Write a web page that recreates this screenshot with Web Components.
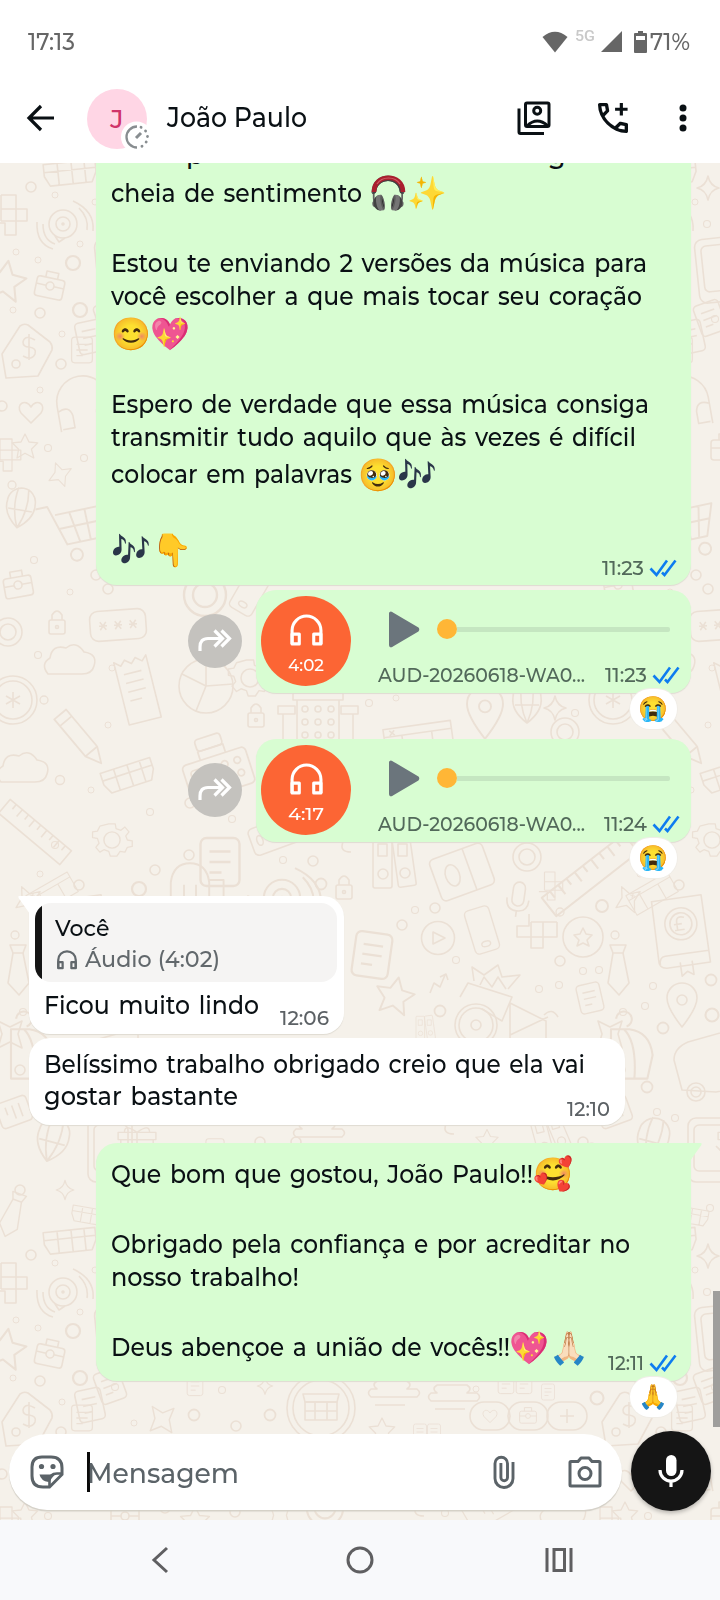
<!DOCTYPE html>
<html lang="pt-BR"><head><meta charset="utf-8"><title>João Paulo</title>
<style>
html,body{margin:0;height:1600px;overflow:hidden;background:#fff}
body{font-family:Montserrat,Inter,"Open Sans",sans-serif;font-weight:460;color:#0a1014}
</style></head><body>
<chat-app>
  <status-bar slot="top"></status-bar>
  <chat-header slot="top" name="João Paulo" initial="J"></chat-header>

  <chat-bubble out nocap style="width:595px;height:446px;margin-top:-24px">
    <text-line style="display:flex"><fit-text style="margin-left:75px">p</fit-text><fit-text style="margin-left:344px">g</fit-text></text-line>
    <text-line emoji><fit-text w="251">cheia de sentimento</fit-text><emoji-glyph kind="phones" style="margin-left:8px">🎧</emoji-glyph><emoji-glyph style="margin-left:2px">✨</emoji-glyph></text-line>
    <text-line></text-line>
    <text-line><fit-text w="536">Estou te enviando 2 versões da música para</fit-text></text-line>
    <text-line><fit-text w="531">você escolher a que mais tocar seu coração</fit-text></text-line>
    <text-line emoji><emoji-glyph style="margin-left:2px">😊</emoji-glyph><emoji-glyph style="margin-left:2px">💖</emoji-glyph></text-line>
    <text-line></text-line>
    <text-line><fit-text w="538">Espero de verdade que essa música consiga</fit-text></text-line>
    <text-line><fit-text w="525">transmitir tudo aquilo que às vezes é difícil</fit-text></text-line>
    <text-line emoji><fit-text w="241">colocar em palavras</fit-text><emoji-glyph style="margin-left:8px">🥹</emoji-glyph><emoji-glyph kind="notes" style="margin-left:2px">🎶</emoji-glyph></text-line>
    <text-line></text-line>
    <text-line emoji><emoji-glyph kind="notes" style="margin-left:2px">🎶</emoji-glyph><emoji-glyph style="margin-left:4px">👇</emoji-glyph></text-line>
    <msg-time slot="time" w="42" read>11:23</msg-time>
  </chat-bubble>

  <audio-message dur="4:02" time="11:23" tw="42" style="margin-top:4.5px"></audio-message>
  <audio-message dur="4:17" time="11:24" tw="43" style="margin-top:46.3px"></audio-message>

  <chat-bubble tail style="width:315px;height:138px;margin-top:54px;padding-top:7px">
    <quote-box who="Você" what="Áudio (4:02)"></quote-box>
    <text-line style="margin-top:7px"><fit-text w="215">Ficou muito lindo</fit-text></text-line>
    <msg-time slot="time" w="49">12:06</msg-time>
  </chat-bubble>
  <chat-bubble style="width:596px;height:87px;margin-top:4px;padding-top:10px">
    <text-line><fit-text w="541">Belíssimo trabalho obrigado creio que ela vai</fit-text></text-line>
    <text-line><fit-text w="194">gostar bastante</fit-text></text-line>
    <msg-time slot="time" w="43">12:10</msg-time>
  </chat-bubble>
  <chat-bubble out tail style="width:595px;height:238px;margin-top:18px;padding-top:10px">
    <text-line emoji><fit-text w="422">Que bom que gostou, João Paulo!!</fit-text><emoji-glyph style="margin-left:2px">🥰</emoji-glyph></text-line>
    <text-line></text-line>
    <text-line><fit-text w="519">Obrigado pela confiança e por acreditar no</fit-text></text-line>
    <text-line><fit-text w="188">nosso trabalho!</fit-text></text-line>
    <text-line></text-line>
    <text-line emoji><fit-text w="399">Deus abençoe a união de vocês!!</fit-text><emoji-glyph style="margin-left:1px">💖</emoji-glyph><emoji-glyph style="margin-left:3px">🙏🏻</emoji-glyph></text-line>
    <msg-time slot="time" w="36" read>12:11</msg-time>
    <reaction-pill slot="reaction">🙏</reaction-pill>
  </chat-bubble>

  <chat-composer slot="bottom" hint="Mensagem"></chat-composer>
  <nav-bar slot="nav"></nav-bar>
</chat-app>

<script>
const define=(name,html,setup)=>customElements.define(name,class extends HTMLElement{
  connectedCallback(){
    if(this.shadowRoot)return;
    const t=document.createElement('template');
    t.innerHTML=typeof html==='function'?html(this):html;
    this.attachShadow({mode:'open'}).append(t.content.cloneNode(true));
    if(setup)setup(this,this.shadowRoot);
  }
});

define('text-line',`<style>:host{display:flex;align-items:center;height:32.6px;line-height:32.6px;font-size:26px;word-spacing:2.5px;padding-left:15px}:host([emoji]){padding-top:5.1px;padding-bottom:5.3px}</style><slot></slot>`);

define('emoji-glyph',el=>`<style>:host{display:flex;flex:none;position:relative;top:.6px;width:37px;height:37px;align-items:center;justify-content:center;font:32px/37px "Noto Color Emoji",sans-serif;word-spacing:0;white-space:nowrap}
:host([kind=notes]) span{filter:brightness(.5) saturate(1.7) hue-rotate(25deg)}svg{position:absolute;left:0;top:0}</style><span><slot></slot></span>${el.getAttribute('kind')==='phones'?'<svg width="37" height="37"><path d="M4 17C4-2 33-2 33 17" fill="none" stroke="#a91f2e" stroke-width="4.6"/><path d="M7 9C12 1 25 1 30 9" fill="none" stroke="#cf5a66" stroke-width="1.2"/></svg>':''}`);

define('msg-time',el=>`<style>:host{display:flex;align-items:center;font-size:19.5px;line-height:20px;color:#5c6165}:host([read]){color:#52695a}svg{margin-left:5px}</style>
<fit-text w="${el.getAttribute('w')}">${el.textContent}</fit-text>${el.hasAttribute('read')?'<svg width="28" height="20" viewBox="0 0 28 20"><path d="M1.5 10.5l6 6.5L18 2.5M13 14.5l2.5 2.5L26.5 2.5" fill="none" stroke="#0e7cf0" stroke-width="2.6"/></svg>':''}`);

define('reaction-pill',`<style>:host{position:absolute;right:14.5px;bottom:-36.5px;z-index:2;width:47px;height:40px;border-radius:20px;background:#fff;box-shadow:0 0 0 1px #f0ede7;display:flex;align-items:center;justify-content:center;font:24px/40px "Noto Color Emoji",sans-serif}</style><slot></slot>`);

define('chat-bubble',`<style>:host{display:block;box-sizing:border-box;position:relative;flex:none;align-self:flex-start;margin-left:29px;background:#fff;border-radius:21px;box-shadow:0 1px 1px #dfdbd2}
:host([out]){align-self:flex-end;margin:0 29px 0 0;background:#d8fdd2}
:host([tail]){border-top-left-radius:0}:host([out][tail]){border-radius:21px 0 21px 21px}
.time{position:absolute;right:15px;bottom:6px}:host([out]) .time{right:14.500px;bottom:7.500px}
svg{display:none;position:absolute;top:0;left:-11px}:host([tail]) svg{display:block}:host([out]) svg{left:auto;right:-11px;transform:scaleX(-1)}
path{fill:#fff}:host([out]) path{fill:#d8fdd2}</style><svg width="12" height="18"><path d="M12 18V0H1.5Q-.5 0 .8 2.2Z"/></svg><slot></slot><div class="time"><slot name="time"></slot></div><slot name="reaction"></slot>`);

const phones=(w,c,sw)=>`<svg width="${w}" height="${w}" viewBox="0 0 32 32" fill="none" stroke="${c}" stroke-width="${sw}"><path d="M2 29V16a14 14 0 0 1 28 0V29"/><path d="M2 19.5h7V29H2zM23 19.5h7V29h-7z" stroke-linejoin="round"/></svg>`;

define('audio-message',el=>`<style>:host{display:flex;position:relative;align-items:center;align-self:flex-end;flex:none;margin-right:29px;height:103px}
.fwd{width:54px;height:54px;border-radius:50%;background:#c4c2be;display:flex;align-items:center;justify-content:center;margin-right:14px}
.b{display:flex;box-sizing:border-box;width:435px;height:103px;border-radius:20px;background:#d8fdd2;box-shadow:0 1px 1px #dfdbd2;padding:6px 0 0 5px}
.disc{width:90px;height:90px;border-radius:50%;background:#fc6534;color:#fff;text-align:center;font-size:17.5px;line-height:20px;flex:none}
.disc svg{display:block;margin:18.5px auto 8px}
.r{flex:1;padding-left:26.500px}.p{display:flex;align-items:center;height:67px;padding:0 0 2px 10px}
.p svg{margin-right:17.500px}.dot{width:20px;height:20px;border-radius:50%;background:#ffb636}.tr{width:213px;height:5px;border-radius:0 2px 2px 0;background:#c5e6c1}
.m{display:flex;align-items:center;height:20px;line-height:20px;font-size:19.5px;color:#52695a}msg-time{margin-left:auto;margin-right:11px}</style>
<div class="fwd"><svg width="34" height="24" viewBox="0 0 34 24" fill="none" stroke="#fff" stroke-width="3.2"><path d="M2 22V18Q2 9.5 10 9.5H23M16.5 1.500l8 8-8 8M23.500 1.500l8 8-8 8"/></svg></div>
<div class="b"><div class="disc">${phones(33,'#fff',3)}<fit-text w="36">${el.getAttribute('dur')}</fit-text></div>
<div class="r"><div class="p"><svg width="32" height="37" viewBox="0 0 32 37"><path d="M2 2.500Q2 1 4 2L29.500 17Q31 18.500 29.500 20L4 35Q2 36 2 34Z" fill="#6b757c" stroke="#6b757c" stroke-width="2" stroke-linejoin="round"/></svg><span class="dot"></span><span class="tr"></span></div>
<div class="m"><fit-text w="207">AUD-20260618-WA0...</fit-text><msg-time w="${el.getAttribute('tw')}" read>${el.getAttribute('time')}</msg-time></div></div></div>
<reaction-pill>😭</reaction-pill>`);

define('quote-box',el=>`<style>:host{display:block;box-sizing:border-box;margin:0 7px 0 6px;height:79px;border-radius:16px;background:linear-gradient(90deg,#151515 7px,#f5f4f3 7px);padding:10px 0 0 20px;font-size:23px}
.a,.c{display:flex;align-items:center;height:31.500px;line-height:31.500px}.c{color:#62686c}svg{margin:0 8px 0 2px}</style>
<div class="a"><fit-text w="54.500">${el.getAttribute('who')}</fit-text></div><div class="c">${phones(20,'#62686c',3.6)}<fit-text w="135">${el.getAttribute('what')}</fit-text></div>`);

define('status-bar',`<style>:host{display:flex;align-items:center;height:83px;padding:0 30px 0 28px;color:#666;font-size:23.500px;line-height:30px}
.g{margin-left:auto;display:flex;align-items:center}svg{display:block;flex:none}.n{font:500 14.500px/16px Roboto,sans-serif;color:#c9c9c9;margin:-9px 6px 0 7px}</style>
<fit-text w="47">17:13</fit-text><div class="g">
<svg width="26" height="22" viewBox="0 0 26 22"><path d="M13 21.500L.5 6Q13-4.500 25.500 6Z" fill="#666"/></svg>
<fit-text class="n" w="20">5G</fit-text>
<svg width="21" height="21"><path d="M21 0V21H0Z" fill="#666"/></svg>
<svg width="13" height="22" viewBox="0 0 13 22" style="margin-left:12px"><path d="M4 2V0h5v2h3q1 0 1 1v18q0 1-1 1H1q-1 0-1-1V3q0-1 1-1z" fill="#666"/><path d="M2 5h9v4H2z" fill="#fff"/></svg>
<fit-text w="40" style="margin-left:3px">71%</fit-text></div>`);

define('chat-header',el=>`<style>:host{display:flex;align-items:center;height:80px;box-sizing:border-box;padding-bottom:11px;background:#fff;padding-left:26px}
svg{display:block;flex:none}.av{position:relative;width:60px;height:60px;border-radius:50%;background:#ffd6e5;color:#d0346a;font-size:26px;line-height:60px;text-align:center;margin:2px 0 0 32px}
.bd{position:absolute;left:34px;top:32px}.nm{font-size:27px;line-height:34px;margin-left:20px;margin-top:1px}
.i1{margin-left:auto}.i2{margin-left:42px}.i3{margin:0 33px 0 46px}</style>
<svg width="29" height="28" viewBox="0 0 29 28" fill="none" stroke="#0a1014" stroke-width="3.2"><path d="M15 2L3 14l12 12M3 14h25"/></svg>
<div class="av">${el.getAttribute('initial')}<svg class="bd" width="32" height="32" viewBox="0 0 32 32"><circle cx="15.500" cy="16" r="15.500" fill="#fff"/><g fill="none" stroke="#888d90" stroke-width="2.300"><path d="M16 26.500A10.500 10.500 0 1 1 16 5.500"/><path d="M20 6.300A10.500 10.500 0 0 1 20 25.700" stroke-width="2.800" stroke-linecap="round" stroke-dasharray=".1 5.700"/><path d="M15 17l5-5" stroke-width="3"/></g></svg></div>
<fit-text class="nm" w="140">${el.getAttribute('name')}</fit-text>
<svg class="i1" width="34" height="34" viewBox="0 0 34 34" fill="none" stroke="#0a1014" stroke-width="3"><rect x="8.500" y="2" width="23.500" height="23.500" rx="1.500"/><circle cx="20.200" cy="9.800" r="3.500"/><path d="M10 25q10-10 21 0"/><path d="M2 7.500V31q0 1.500 1.500 1.500H27"/></svg>
<svg class="i2" width="40" height="40" viewBox="0 0 24 24"><path fill="#0a1014" d="M19.950 21q-3.125 0-6.175-1.363-3.050-1.362-5.550-3.862-2.500-2.500-3.862-5.550Q3 7.175 3 4.050q0-.450.300-.750t.750-.300H8.100q.350 0 .625.238.275.237.325.562l.650 3.500q.050.400-.025.675-.075.275-.275.475L6.975 10.900q.500.925 1.187 1.787.688.863 1.513 1.663.775.775 1.625 1.437.850.663 1.800 1.213l2.350-2.350q.225-.225.588-.338.362-.112.712-.062l3.450.700q.350.100.575.363.225.262.225.587v4.050q0 .450-.300.750t-.750.300ZM6.025 9l1.650-1.650L7.250 5H5.025q.125 1.025.350 2.025Q5.600 8.025 6.025 9Zm8.950 8.950q.975.425 1.988.675 1.012.250 2.037.325v-2.200l-2.350-.475Z"/><path d="M17 3v7.500M13.250 6.750h7.500" stroke="#0a1014" stroke-width="1.900"/></svg>
<svg class="i3" width="8" height="28" fill="#0a1014"><circle cx="4" cy="4" r="3.500"/><circle cx="4" cy="14" r="3.500"/><circle cx="4" cy="24" r="3.500"/></svg>`);

define('chat-composer',el=>`<style>:host{display:flex;align-items:flex-start;height:89px;padding-left:9px;position:relative}svg{display:block;flex:none}
.in{display:flex;align-items:center;box-sizing:border-box;width:613px;height:76px;margin-top:3px;border-radius:38px;background:#fff;box-shadow:0 1.500px 1px #d3cfc6;padding-left:21px;color:#5b6368;font-size:27.500px}
.car{width:3px;height:40px;background:#0a0a0a;margin-left:23px}.mic{width:80px;height:80px;border-radius:50%;background:#151515;margin-left:9px;display:flex;align-items:center;justify-content:center;box-shadow:0 2px 4px #0004}</style>
<div class="in"><svg width="34" height="34" viewBox="0 0 34 34" fill="none" stroke="#5b6368" stroke-width="3"><path d="M12 2H21Q32 2 32 13V19.500L19.500 32H13Q2 32 2 21V12Q2 2 12 2Z"/><path d="M32 18.500H27Q19.500 18.500 19.500 26V32" stroke-width="2.600"/><circle cx="11.500" cy="11.500" r="2.600" fill="#5b6368" stroke="none"/><circle cx="23" cy="11.500" r="2.600" fill="#5b6368" stroke="none"/><path d="M9.500 19.500H25L18.500 27Q11 26 9.500 19.500Z" fill="#5b6368" stroke="none"/></svg>
<span class="car"></span><fit-text w="152" style="margin:2px 0 0 -3px">${el.getAttribute('hint')}</fit-text>
<svg width="22" height="35" viewBox="0 0 22 35" fill="none" stroke="#5b6368" stroke-width="2.900" style="margin-left:254px"><path d="M20 7V23.500a9 9 0 0 1-18 0V8.500a6.200 6.200 0 0 1 12.500 0V22.500a3.300 3.300 0 0 1-6.600 0V8"/></svg>
<svg width="34" height="32" viewBox="0 0 34 32" fill="none" stroke="#5b6368" stroke-width="3" style="margin-left:53px"><path d="M2 6.500Q2 5.500 3 5.500H10L13 2H21L24 5.500H31Q32 5.500 32 6.500V29Q32 30 31 30H3Q2 30 2 29Z" stroke-linejoin="round"/><circle cx="17" cy="17.500" r="6"/></svg></div>
<div class="mic"><svg width="26" height="34" viewBox="0 0 26 34"><rect x="8" y="1" width="10.500" height="21" rx="5.200" fill="#fff"/><path d="M2 16a11 11 0 0 0 22 0M13 26v7" fill="none" stroke="#fff" stroke-width="3.200"/></svg></div>`);

define('nav-bar',`<style>:host{display:flex;justify-content:space-between;align-items:center;height:80px;box-sizing:border-box;padding:0 147px 0 151px;background:#f8f9fb}</style>
<svg width="19" height="28" fill="none" stroke="#5f5f61" stroke-width="3"><path d="M16 2L3 14l13 12"/></svg>
<svg width="28" height="28" fill="none" stroke="#5f5f61" stroke-width="3" style="margin-left:4px"><circle cx="14" cy="14" r="12"/></svg>
<svg width="28" height="26" fill="none" stroke="#5f5f61" stroke-width="3"><path d="M2 1v24M26 1v24M9 2.500h10.500v21H9z"/></svg>`);

/* Line-art motifs, each centred on 0,0. */
const M={
 c:'<circle r="5"/>',cc:'<circle r="14"/><circle r="8"/>',
 heart:'<path d="M0 11L-10 1C-16-8-5-14 0-5C5-14 16-8 10 1Z"/>',
 star:'<path d="M0-15L5-5 16-4 8 4 11 15 0 9-10 15-8 4-16-4-5-5Z"/>',
 spark:'<path d="M0-12Q2-2 11 0Q2 2 0 12Q-2 2-11 0Q-2-2 0-12Z"/>',
 blocks:'<path d="M-15-20h15v14h11v12h-11v14h-11v-12h-12M-15-20v26M-15-6h15v12h-15"/>',
 chat:'<circle r="14"/><circle r="7"/><circle r="1"/><path d="M-8 12l4 6 6-4M16-16q10 10 8 22M10-23q22 10 20 30M-20 0q0 16 12 20M-26-2q-1 22 16 27"/>',
 crate:'<path d="M-26-10h52v12l-5 10h-42l-5-10zM-26-2h52M-12-10v22M2-10v22M15-10v22"/>',
 bag:'<rect x="-14" y="-8" width="28" height="20" rx="3"/><path d="M-6-8v-6h12v6M-14 0h10M4 0h10"/><circle r="4"/>',
 tag:'<path d="M-22 26L-26 2-8-26Q-4-29 0-27L22-10Q25-6 24-2L10 24Z"/><path d="M7-12q-10-6-12 2q0 5 6 5q8 1 6 7q-3 7-12 2M1-18v26"/><circle cx="-12" cy="12" r="4"/>',
 doc:'<rect x="-13" y="-16" width="26" height="32" rx="4"/><path d="M-7-7h14M-7 0h14M-7 7h8"/>',
 phone:'<rect x="-14" y="-25" width="28" height="50" rx="5"/><ellipse cy="16" rx="5" ry="3"/>',
 tablet:'<rect x="-20" y="-32" width="44" height="64" rx="8"/><rect x="-14" y="-25" width="34" height="46" rx="5"/><path d="M8-4l7 7 10-2"/>',
 can:'<path d="M-26 30V4a26 26 0 0 1 52 0V30M-26 10q12-6 14 6v12h-12M26 10q-12-6-14 6v12h12"/>',
 cart:'<path d="M-32-20h10l10 34h34l9-26h-48M-16 0h43M-5-12l4 26M8-12v26M20-12l-5 26"/><circle cx="-6" cy="24" r="5"/><circle cx="18" cy="24" r="5"/>',
 lock:'<rect x="-8" y="-5" width="16" height="14" rx="2"/><path d="M-5-5v-5q5-8 10 0v5"/><circle cy="2" r="1.500"/>',
 pass:'<rect x="-28" y="-15" width="56" height="30" rx="8"/><path d="M-18-4l6 8m0-8l-6 8M-19 0h8M-3-4l6 8m0-8l-6 8M-4 0h8M12-4l6 8m0-8l-6 8M11 0h8"/>',
 coin:'<circle r="20"/><path d="M0-9L3-3 9-2 4 3 6 9 0 6-6 9-4 3-9-2-3-3Z"/>',
 aster:'<circle r="24"/><circle r="19"/><path d="M0-8V8M-7-4L7 4M-7 4L7-4"/>',
 cloud:'<path d="M-24 12q-8-10 2-16q2-14 16-10q10-8 18 4q14 2 10 14q-2 8-12 8z"/>',
 receipt:'<path d="M-16-32l6 5 5-5 6 5 5-5 6 5 5-5V32H-16ZM-9-18h18M-9-9h18M-9 0h18M-9 9h12"/>',
 pencil:'<path d="M-7-28h14V16L0 30-7 16ZM-7-20h14M-7 16h14"/>',
 pie:'<circle r="27"/><path d="M0 0L-24-12M0 0l27-2M0 0l-10 25M0 0V-27"/>',
 gear:'<circle r="9"/><path d="M-4-20h8l1 6 6 2 5-4 5 6-4 5 2 5 6 1v7l-6 1-3 6-6-1-4 6h-8l-2-6-6-2-5 3-5-6 4-5-2-6-6-1v-7l6-1 3-6z" transform="scale(.9)"/>',
 build:'<path d="M-25-29h50v7h-50zM-21-22v44M21-22v44M-40-16h17v8h-17zM23-16h17v8h-17zM-35-8v30M35-8v30"/><g><circle cx="-13" cy="-13" r="3"/><circle cy="-13" r="3"/><circle cx="13" cy="-13" r="3"/><circle cx="-13" r="3"/><circle r="3"/><circle cx="13" r="3"/><circle cx="-13" cy="13" r="3"/><circle cy="13" r="3"/><circle cx="13" cy="13" r="3"/></g>',
 reg:'<rect x="-30" y="-15" width="60" height="34" rx="4"/><path d="M-12-15v-8h24v8"/><rect x="-12" y="-34" width="24" height="11" rx="3"/><rect x="-24" y="-8" width="22" height="7" rx="3"/><circle cx="-18" cy="7" r="3"/><circle cx="-6" cy="7" r="3"/><circle cx="8" cy="7" r="3"/><circle cx="20" cy="7" r="3"/><circle cx="8" cy="-5" r="3"/><circle cx="20" cy="-5" r="3"/>',
 books:'<rect x="-20" y="-26" width="19" height="52" rx="2"/><rect x="2" y="-26" width="18" height="52" rx="2" transform="rotate(-8)"/><circle cx="-10" cy="12" r="5"/><circle cx="12" cy="11" r="5"/><path d="M-15-18h9v12h-9zM5-18h9v12h-9z"/>',
 play:'<circle r="16.500"/><path d="M-5-6v12L7 0z"/>',
 mic:'<rect x="-6" y="-17" width="12" height="24" rx="6"/><path d="M-11 0q0 12 11 12t11-12M0 12v6"/>',
 tie:'<path d="M-8-25h16l-3 8 6 30-10 12-11-12 5-30zM-6-17h12"/>',
 book:'<path d="M-24-34h50V34h-44q-8-1-7-9zM26 22h-44q-6 0-6 8M-4 30v14l6-4 6 4v-14"/><circle cx="2" cy="-8" r="16"/><circle cx="2" cy="-8" r="11"/><path d="M6-14q-8-3-8 4v8h-2 9M-5-8h8"/>',
 pin:'<path d="M0 24Q-15 5-15-5a15 15 0 0 1 30 0Q15 5 0 24Z"/><circle cy="-3" r="5"/>',
 truck:'<path d="M-26 20L-34-10Q-34-22-20-28L30-42V18L8 22z"/><circle cx="-12" cy="22" r="9"/><circle cx="-12" cy="22" r="5"/>',
 pack:'<path d="M-10-16h14q16 2 18 20l-4 18h-28zM0-16q10 10 8 38M-6-24a6 6 0 1 1 8 6"/>',
 bike:'<circle cx="-20" cy="20" r="21"/><circle cx="-20" cy="20" r="17"/><circle cx="-20" cy="20" r="5"/><path d="M-36-8l8-14 44 14-10 24-20-12M14-2l36 18v26M14-2v36M14 30l38-18M48 10q8-8 14 2M-22-24l-2-14 12 8 14-10 4 12 18-2-12 14"/><path d="M-16-20l4-8 8 10 6-10 8 12"/>',
 shop:'<circle r="34"/><circle r="28"/><rect x="-16" y="-6" width="32" height="18"/><path d="M-18-14h36l-2 8h-32zM-16 3h32M-6-6v18M6-6v18"/>',
 pill:'<rect x="-20" y="-14" width="40" height="28" rx="14"/>',plus:'<path d="M-7 0h14M0-7v14"/>',
 bow:'<path d="M-12-14l12 6 12-6-4 13 4 14-12-6-12 6 4-14z"/>',
 gift:'<rect x="-18" y="-6" width="36" height="24"/><path d="M-21-14h42v8h-42zM0-14v32M0-14q-14-10-14 0M0-14q14-10 14 0"/>',
 ruler:'<path d="M-40-9h80v18h-80zM-32-9v6M-24-9v9M-16-9v6M-8-9v9M0-9v6M8-9v9M16-9v6M24-9v9M32-9v6"/>',
 card:'<rect x="-28" y="-22" width="56" height="44" rx="5"/><path d="M8-22v44"/><ellipse cx="-10" rx="7" ry="11"/>',
 mug:'<path d="M-16 20v-28q2-16 16-16 14 0 16 16v28zM-5 20v-26M5 20v-26M16-10h12v20h-12"/>',
 sq:'<path d="M-12-14q12-4 8 6t8 10"/>',arr:'<path d="M-8 10l4-10 6 4 5-12M2-6l6-3 2 6"/>',
 ball:'<path d="M0 18Q-16 6-14-8a14 14 0 0 1 28 0Q16 6 0 18ZM-12 0h24M-5-22q-4 20 5 40M5-22q4 20-5 40"/>',
 lines:'<path d="M-18-12h30q6 4 0 8h10q5 4 0 8h-46q-5-4 0-8h6q-6-4 0-8M-20 12h30"/>',
 clap:'<path d="M-34-10h68v32h-68zM-34-2h68M-16-2v24M14-2v24"/><path d="M-28-8l5 5m0-5l-5 5"/>'
};
/* Motif, x, y, scale, rotation. */
const P=`crate 70 172 1 -6;c 31 187;c 55 195 .6;blocks 16 215;chat 63 224;c 80 244 .6;c 16 252 .6;c 38 260 .6;c 73 263 1.400;star 5 280 1.300 10;bag 50 286 1 12;c 13 310 .6;c 40 313;c 80 310 1.400;c 62 334 .6;tag 28 352;doc 90 337 1 -12;c 61 364;c 40 390 .6;heart 31 412;can 82 398 1 -10;c 2 406;
blocks 12 455 .800;c 48 448 .700;c 84 458 .700;bow 60 475 .700 20;cart 78 525 1.200 -12;ball 20 510 1 10;c 12 485 .800;c 34 560 .700;bag 18 585 1 -10;c 96 575 1;c 70 592 .600;lock 57 625;pass 118 625 1 -4;c 108 589;cc 8 632;cloud 72 662;c 38 655 .700;aster 13 700;receipt 137 690 1 -14;pencil 80 738 1.100 -40;c 44 700 .800;c 112 668 .600;c 108 725 .600;
cloud 25 770;c 60 780 .900;crate 128 775 1 -18;c 91 790 .600;gear 112 840 .9;c 55 845 .700;ruler 35 832 1 40;c 150 812 .700;c 155 870 1;clap 50 890 .7 -30;
cc 205 595 1.500;phone 250 592 .9 30;pie 206 686;gear 250 678;lock 256 718;build 318 722;reg 218 772 1.100 -18;clap 418 735 1 -8;doc 220 862 1.500;phone 275 835 1 70;c 190 803 1;c 232 819 .700;c 189 855 1;c 283 860 .700;c 313 861 1;sq 347 850;books 393 862;
c 369 703 .700;c 396 698 .600;cc 565 732;pin 485 710 1.200;ball 527 705 1;spark 555 708;c 575 713 .700;ruler 590 875 1.300 -38;card 462 872 1 -20;cc 527 857;blocks 555 886 .7;
star 395 995 1.200 12;c 40 874 .6;c 79 885 1;c 139 889 1.400;mug 190 892 1.200;chat 282 898 1.300;c 321 884 1.100;lock 344 890;tie 18 970;c 15 935 .8;bow 28 900 .8 15;book 80 932 1 -8;doc 372 955 1.400 8;play 438 938;mic 518 899 1 8;phone 482 930 .9 -17;blocks 537 937 1 90;coin 583 937;
c 402 925;c 435 908;c 415 910 .700;c 456 960 .700;c 560 912 .800;c 602 906 1.200;c 560 961 1;c 583 971 .700;c 599 970 .700;c 440 1011 1.100;c 539 989 .700;c 559 985 .700;arr 438 983;bike 496 1005 1;books 425 1028 .45;doc 590 998 .9 -13;pin 82 1003;c 53 986 .7;c 45 1006 .7;c 23 1012 .7;c 111 980 1.100;c 63 1028 1.100;c 112 1015 1.300;pack 24 1050 1.300;truck 108 1070;c 47 1087 1.100;c 57 1112 .7;c 75 1118 .7;
bow 10 1035 1;c 20 1070 1;doc 14 1112 1 70;ball 52 1142 1.100 15;gift 137 1145 .9;tablet 108 1150 1;doc 215 1150 .7;c 260 1142 1;c 296 1142 1;lines 320 1133;sq 450 1132;star 487 1140 .7;books 550 1135 .8 -15;cloud 590 1155 .7;c 583 1142 1;
crate 90 1215 .7 10;c 110 1208 .7;c 20 1190 1;spark 65 1190 .8;tie 12 1215 .9 20;spark 108 188;c 95 202 .6;c 107 224 .7;tablet 117 270 1 -6;c 115 319 .7;
lines 455 329 1;pill 490 348;heart 490 348 .6;pill 528 348;bag 528 348 .6;pill 567 348;plus 567 348;c 476 321 .6;doc 506 316 .6;doc 524 316 .6;doc 548 324 .5;c 597 330 1.300;bow 162 352 .9 5;shop 321 340;c 194 347 1.100;c 270 347 1.100;c 236 358 1;c 134 355 .6;doc 82 350 .8;lines 395 325;star 382 362 .8;doc 420 364 .5;doc 434 364 .5;c 222 322 .7;doc 110 318 1 -20;doc 195 318 .6;spark 265 318 .7;
star 25 446 .8;bag 125 448;c 165 440;star 195 452 .9;c 235 444;bow 280 448 .8;cc 325 440 1.300;sq 420 446;c 445 445 .7;receipt 490 440 .8 60;cloud 565 445 .9`;
define('wa-wallpaper',()=>{
  const g=P.split(/;/).map(r=>{const [n,x,y,s=1,a=0]=r.trim().split(' ');return M[n]?`<g transform="translate(${x} ${y}) rotate(${a}) scale(${s})">${M[n]}</g>`:''}).join('');
  return `<style>:host{display:block;position:absolute;inset:0;background:#f5f1ea}svg{display:block}</style>
<svg width="720" height="1357" viewBox="0 163 720 1357"><defs><g id="t" fill="none" stroke="#ebe0d5" stroke-width="1.600" stroke-linejoin="round">${g}</g></defs>
<use href="#t"/><use href="#t" x="600"/><use href="#t" y="1068"/><use href="#t" x="600" y="1068"/></svg>`;
});

define('chat-app',`<style>:host{display:flex;flex-direction:column;width:720px;height:1600px;background:#fff}
.top{flex:none;height:163px;background:#fff}.room{position:relative;flex:1;display:flex;flex-direction:column;overflow:hidden}
.list{position:relative;flex:1;min-height:0;display:flex;flex-direction:column}.bar{position:absolute;right:0;top:1128px;width:7px;height:136px;background:#9f9e9c}</style>
<div class="top"><slot name="top"></slot></div>
<div class="room"><wa-wallpaper></wa-wallpaper><div class="list"><slot></slot><div class="bar"></div></div><slot name="bottom"></slot></div><slot name="nav"></slot>`);

/* Text condensed or widened to a given width. Registered last, so that
   every parent already gives it the font it is measured in. */
define('fit-text',`<style>:host{display:inline-block;white-space:nowrap;flex:none;text-align:left}span{display:inline-block;transform-origin:0 50%}</style><span><slot></slot></span>`,(el,root)=>{
  const w=+el.getAttribute('w');if(!w)return;
  const s=root.querySelector('span');
  s.style.transform=`scaleX(${w/s.getBoundingClientRect().width})`;
  el.style.width=w+'px';
});
</script>
</body></html>
